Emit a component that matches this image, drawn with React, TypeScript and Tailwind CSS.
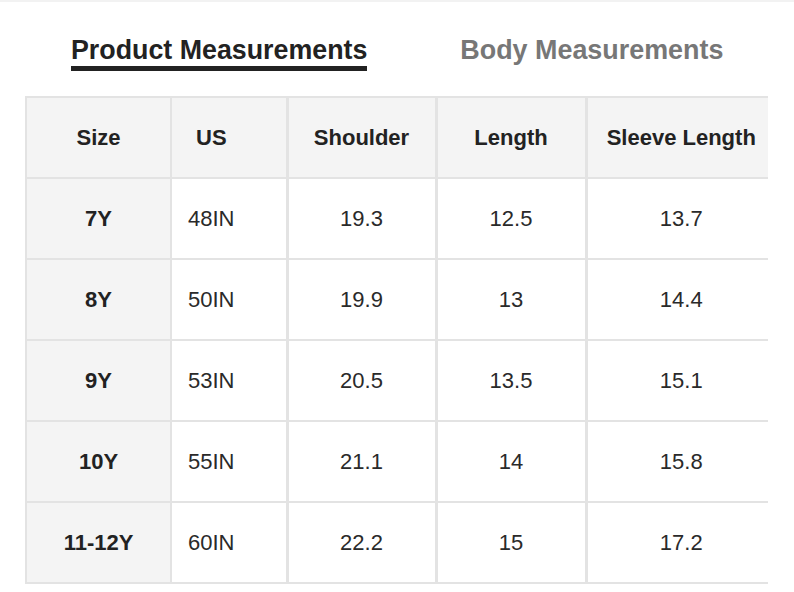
import React from 'react';

const rows = [
  { size: '7Y', us: '48IN', shoulder: '19.3', length: '12.5', sleeve: '13.7' },
  { size: '8Y', us: '50IN', shoulder: '19.9', length: '13', sleeve: '14.4' },
  { size: '9Y', us: '53IN', shoulder: '20.5', length: '13.5', sleeve: '15.1' },
  { size: '10Y', us: '55IN', shoulder: '21.1', length: '14', sleeve: '15.8' },
  { size: '11-12Y', us: '60IN', shoulder: '22.2', length: '15', sleeve: '17.2' },
];

export default function App() {
  return (
    <div className="w-[794px] h-[592px] bg-white overflow-hidden border-t-2 border-[#f2f2f2] font-['Liberation_Sans',Arial,sans-serif]">
      {/* Tabs */}
      <div className="flex items-start pt-[33px]">
        <div className="ml-[71px] flex flex-col items-start">
          <span className="text-[26.8px] leading-[30px] font-bold text-[#222]">Product Measurements</span>
          <div className="mt-[1px] h-[5px] w-full bg-[#222]" />
        </div>
        <div className="ml-[93px]">
          <span className="text-[26.9px] leading-[30px] font-bold text-[#777]">Body Measurements</span>
        </div>
      </div>

      {/* Table */}
      <div className="ml-[25px] mt-[25px] w-[743px] overflow-hidden">
        <table className="table-fixed border-collapse w-[745px] text-[22px] text-[#2a2a2a]">
          <colgroup>
            <col className="w-[145px]" />
            <col className="w-[116px]" />
            <col className="w-[149px]" />
            <col className="w-[150px]" />
            <col className="w-[185px]" />
          </colgroup>
          <thead>
            <tr className="h-[81px] bg-[#f4f4f4]">
              <th className="border-2 border-[#e3e3e3] text-center font-bold text-[#222]">Size</th>
              <th className="border-2 border-r-[3px] border-[#e3e3e3] text-left pl-[24px] font-bold text-[#222]">US</th>
              <th className="border-2 border-r-[3px] border-[#e3e3e3] text-center font-bold text-[#222]">Shoulder</th>
              <th className="border-2 border-r-[3px] border-[#e3e3e3] text-center font-bold text-[#222]">Length</th>
              <th className="border-2 border-r-0 border-[#e3e3e3] text-center pl-[4px] font-bold text-[#222]">Sleeve Length</th>
            </tr>
          </thead>
          <tbody>
            {rows.map((r) => (
              <tr key={r.size} className="h-[81px]">
                <td className="border-2 border-[#e3e3e3] bg-[#f4f4f4] text-center font-bold text-[#222]">{r.size}</td>
                <td className="border-2 border-r-[3px] border-[#e3e3e3] text-left pl-[16px]">{r.us}</td>
                <td className="border-2 border-r-[3px] border-[#e3e3e3] text-center">{r.shoulder}</td>
                <td className="border-2 border-r-[3px] border-[#e3e3e3] text-center">{r.length}</td>
                <td className="border-2 border-r-0 border-[#e3e3e3] text-center pl-[4px]">{r.sleeve}</td>
              </tr>
            ))}
          </tbody>
        </table>
      </div>
    </div>
  );
}
